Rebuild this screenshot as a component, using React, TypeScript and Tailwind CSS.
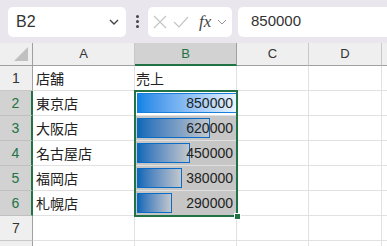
import React from "react";

const font = { fontFamily: '"Liberation Sans", "Noto Sans CJK JP", sans-serif' };
const jp = { fontFamily: '"Noto Sans CJK JP", "Liberation Sans", sans-serif' };

const rows = [
  { n: 1, a: "店舗", b: "売上", bar: 0 },
  { n: 2, a: "東京店", b: "850000", bar: 100 },
  { n: 3, a: "大阪店", b: "620000", bar: 73 },
  { n: 4, a: "名古屋店", b: "450000", bar: 53 },
  { n: 5, a: "福岡店", b: "380000", bar: 45 },
  { n: 6, a: "札幌店", b: "290000", bar: 35 },
  { n: 7, a: "", b: "", bar: 0 },
  { n: 8, a: "", b: "", bar: 0 },
];

export default function App() {
  return (
    <div className="w-[387px] h-[246px] overflow-hidden bg-white relative" style={font}>
      {/* toolbar */}
      <div className="h-[43px] bg-[#e9e7ed] flex items-center pl-[8px] gap-0">
        <div className="w-[118px] h-[30px] bg-white rounded-[5px] flex items-center justify-between pl-[8px] pr-[6px]">
          <span className="text-[16px] text-[#333]">B2</span>
          <svg width="12" height="8" viewBox="0 0 12 8"><path d="M2 2 L6 6 L10 2" stroke="#444" strokeWidth="1.4" fill="none" /></svg>
        </div>
        <div className="w-[22px] flex flex-col items-center gap-[2px]">
          <div className="w-[3px] h-[3px] bg-[#444] rounded-full" />
          <div className="w-[3px] h-[3px] bg-[#444] rounded-full" />
          <div className="w-[3px] h-[3px] bg-[#444] rounded-full" />
        </div>
        <div className="w-[84px] h-[30px] bg-white rounded-[5px] flex items-center pl-[5px] gap-[6px]">
          <svg width="14" height="14" viewBox="0 0 14 14"><path d="M1 1 L13 13 M13 1 L1 13" stroke="#c4c4c4" strokeWidth="1.2" fill="none" /></svg>
          <svg width="16" height="12" viewBox="0 0 16 12"><path d="M1 6 L6 11 L15 1" stroke="#c4c4c4" strokeWidth="1.2" fill="none" /></svg>
          <span className="ml-[4px] text-[17px] italic text-[#444] leading-none" style={{ fontFamily: '"Liberation Serif", serif' }}>fx</span>
          <svg width="10" height="6" viewBox="0 0 10 6"><path d="M1 1 L5 5 L9 1" stroke="#999" strokeWidth="1" fill="none" /></svg>
        </div>
        <div className="ml-[6px] flex-1 h-[30px] bg-white rounded-l-[5px] flex items-center pl-[13px]">
          <span className="text-[15px] text-[#333]">850000</span>
        </div>
      </div>

      {/* header row */}
      <div className="flex h-[23px] text-[13px] text-[#333]">
        <div className="w-[33px] bg-[#efefef] border-r border-b border-[#a0a0a0] relative">
          <div className="absolute right-[4px] bottom-[4px] w-0 h-0 border-l-[14px] border-l-transparent border-b-[14px] border-b-[#c0c0c0]" />
        </div>
        <div className="w-[102px] bg-[#efefef] border-r border-b border-r-[#c8c8c8] border-b-[#a0a0a0] flex items-center justify-center">A</div>
        <div className="w-[102px] bg-[#d2d2d2] border-r border-r-[#a0a0a0] border-b-2 border-b-[#217346] flex items-center justify-center text-[#217346]">B</div>
        <div className="w-[72px] bg-[#efefef] border-r border-b border-r-[#c8c8c8] border-b-[#a0a0a0] flex items-center justify-center">C</div>
        <div className="w-[73px] bg-[#efefef] border-r border-b border-r-[#c8c8c8] border-b-[#a0a0a0] flex items-center justify-center">D</div>
        <div className="flex-1 bg-[#efefef] border-b border-[#a0a0a0]" />
      </div>

      {rows.map((r) => {
        const sel = r.n >= 2 && r.n <= 6;
        const active = r.n === 2;
        return (
          <div key={r.n} className="flex h-[25px] text-[14px] text-[#222]">
            <div
              className={
                sel
                  ? "w-[33px] bg-[#d2d2d2] border-b border-b-[#c0c0c0] border-r-2 border-r-[#217346] flex items-center justify-center text-[#217346]"
                  : "w-[33px] bg-[#efefef] border-b border-b-[#c8c8c8] border-r border-r-[#a0a0a0] flex items-center justify-center text-[#333]"
              }
            >
              {r.n <= 7 ? r.n : ""}
            </div>
            <div className="w-[102px] border-r border-b border-[#e1e1e1] flex items-center pl-[3px]" style={jp}>
              {r.a}
            </div>
            <div
              className={
                "w-[102px] border-r border-b border-[#e1e1e1] relative flex items-center justify-end pr-[3px] " +
                (sel && !active ? "bg-[#c6c6c6]" : "bg-white")
              }
            >
              {r.bar > 0 && (
                <div
                  className={
                    "absolute left-[2px] top-[2px] bottom-[2px] border " +
                    (active
                      ? "border-[#1a7fd8] bg-gradient-to-r from-[#0a84e6] to-[#eaf4fd]"
                      : "border-[#0a6cc4] bg-gradient-to-r from-[#0668b8] to-[#c3c7cb]")
                  }
                  style={{ width: `${r.bar}px` }}
                />
              )}
              <span className={"relative " + (r.n === 1 ? "mr-auto pl-[1px]" : "")} style={r.n === 1 ? jp : undefined}>
                {r.b}
              </span>
            </div>
            <div className="w-[72px] border-r border-b border-[#e1e1e1]" />
            <div className="w-[73px] border-r border-b border-[#e1e1e1]" />
            <div className="flex-1 border-b border-[#e1e1e1]" />
          </div>
        );
      })}

      {/* selection overlay */}
      <div className="absolute left-[134px] top-[90px] w-[104px] h-[127px] border-2 border-[#217346] pointer-events-none" />
      <div className="absolute left-[234px] top-[213px] w-[7px] h-[7px] bg-[#217346] border border-white" />
    </div>
  );
}
